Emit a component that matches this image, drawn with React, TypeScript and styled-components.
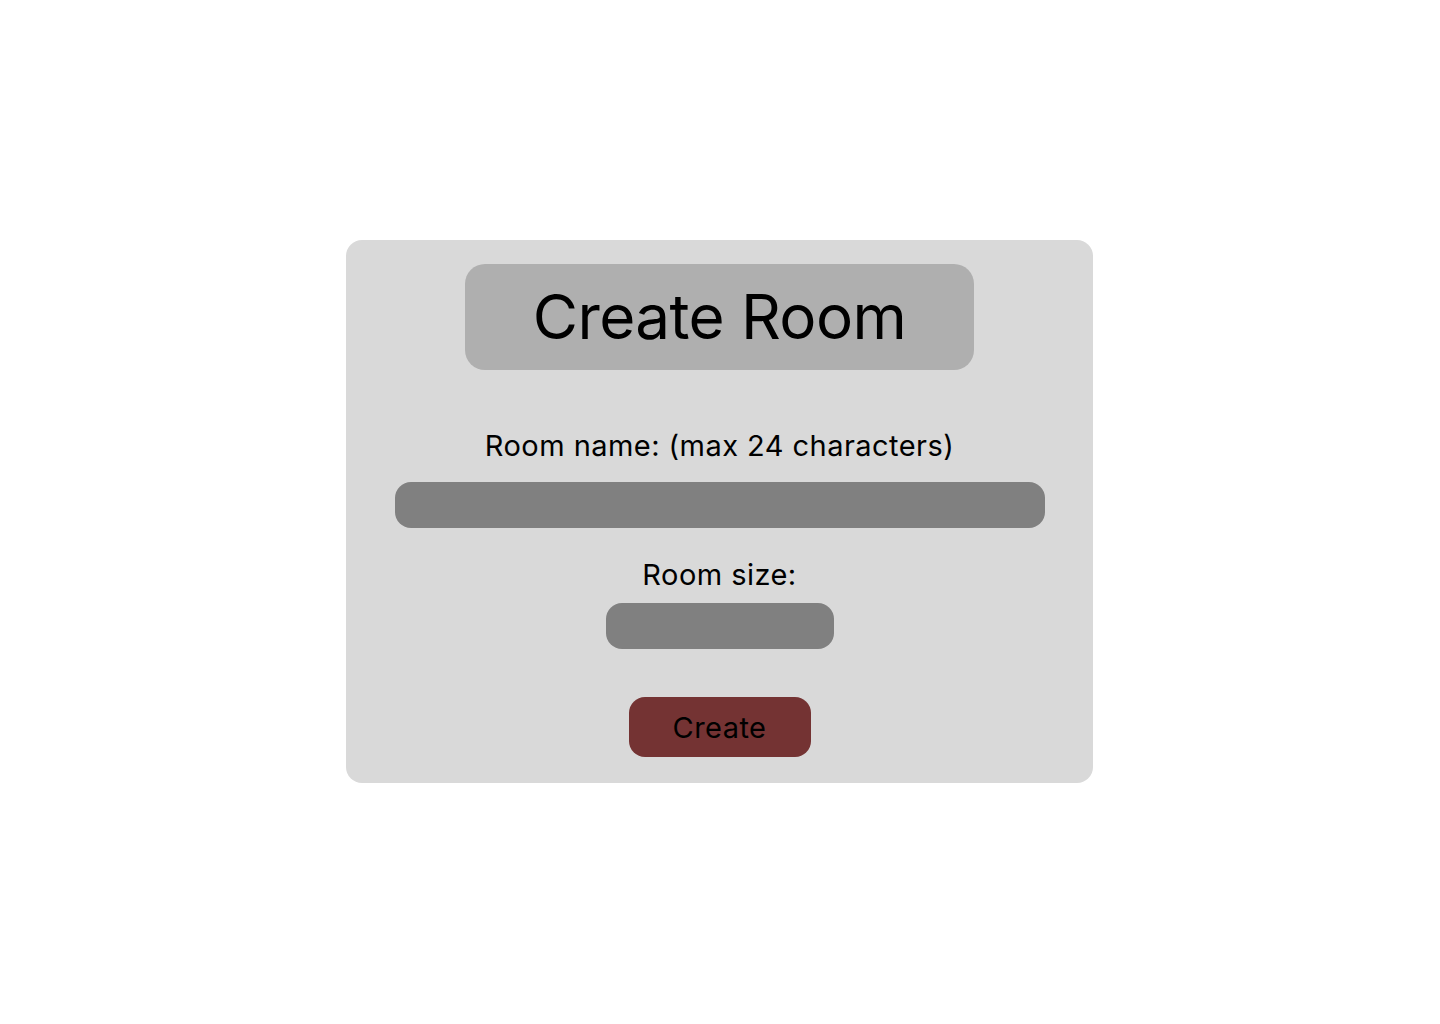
import React, { useState } from "react";
import styled, { createGlobalStyle } from "styled-components";

const GlobalStyle = createGlobalStyle`
  html, body {
    margin: 0;
    padding: 0;
    background: #ffffff;
    font-family: Inter, "Noto Sans", sans-serif;
  }
`;

const Page = styled.div`
  width: 1439px;
  height: 1023px;
  display: flex;
  align-items: center;
  justify-content: center;
`;

const Card = styled.div`
  width: 747px;
  height: 543px;
  box-sizing: border-box;
  background: #d9d9d9;
  border-radius: 16px;
  padding: 24px 0 26px;
  display: flex;
  flex-direction: column;
  align-items: center;
`;

const TitleBox = styled.div`
  width: 509px;
  height: 106px;
  background: #afafaf;
  border-radius: 20px;
  display: flex;
  align-items: center;
  justify-content: center;
`;

const Title = styled.h1`
  margin: 0;
  font-size: 62px;
  letter-spacing: -0.6px;
  font-weight: 400;
  color: #000;
  line-height: 1;
`;

const Label = styled.label<{ $top: number }>`
  margin-top: ${(p) => p.$top}px;
  font-size: 29px;
  letter-spacing: 0.45px;
  line-height: 34px;
  color: #000;
`;

const Field = styled.input<{ $width: number; $top: number }>`
  margin-top: ${(p) => p.$top}px;
  width: ${(p) => p.$width}px;
  height: 46px;
  box-sizing: border-box;
  border: 0;
  border-radius: 16px;
  background: #808080;
  padding: 0 16px;
  font-family: inherit;
  font-size: 24px;
  outline: none;
`;

const CreateButton = styled.button`
  margin-top: 48px;
  width: 182px;
  height: 60px;
  border: 0;
  border-radius: 16px;
  background: #743333;
  color: #000;
  font-family: inherit;
  font-size: 29px;
  letter-spacing: 0.45px;
  cursor: pointer;
`;

const App = () => {
  const [name, setName] = useState("");
  const [size, setSize] = useState("");

  return (
    <>
      <GlobalStyle />
      <Page>
        <Card>
          <TitleBox>
            <Title>Create Room</Title>
          </TitleBox>
          <Label $top={59}>Room name: (max 24 characters)</Label>
          <Field
            $width={650}
            $top={19}
            maxLength={24}
            value={name}
            onChange={(e) => setName(e.currentTarget.value)}
          />
          <Label $top={30}>Room size:</Label>
          <Field
            $width={228}
            $top={11}
            value={size}
            onChange={(e) => setSize(e.currentTarget.value)}
          />
          <CreateButton>Create</CreateButton>
        </Card>
      </Page>
    </>
  );
};

export default App;
